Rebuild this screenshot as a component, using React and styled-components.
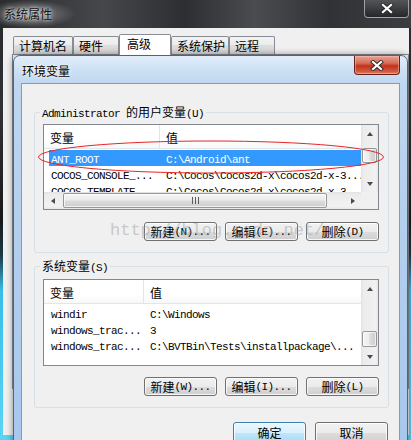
import React from "react";
import styled, { createGlobalStyle, css } from "styled-components";

const HAN = /([\u2E80-\u9FFF\uFF00-\uFFEF]+)/;

const userVars = [
  { name: "ANT_ROOT", value: "C:\\Android\\ant", selected: true },
  { name: "COCOS_CONSOLE_...", value: "C:\\Cocos\\Cocos2d-x\\cocos2d-x-3..." },
  { name: "COCOS_TEMPLATE...", value: "C:\\Cocos\\Cocos2d-x\\cocos2d-x-3..." },
];

const systemVars = [
  { name: "windir", value: "C:\\Windows" },
  { name: "windows_trac...", value: "3" },
  { name: "windows_trac...", value: "C:\\BVTBin\\Tests\\installpackage\\..." },
];

const tabs = [
  { label: "计算机名", width: 60 },
  { label: "硬件", width: 46 },
  { label: "高级", width: 52, active: true },
  { label: "系统保护", width: 58 },
  { label: "远程", width: 46 },
];

function Mixed({ text }) {
  return text.split(HAN).map((part, i) => {
    if (!part) return null;
    return HAN.test(part) ? <Han key={i}>{part}</Han> : <Latin key={i}>{part}</Latin>;
  });
}

function CloseGlyph() {
  return (
    <svg width="14" height="11" viewBox="0 0 14 11">
      <path d="M3 2 L11 9 M11 2 L3 9" stroke="#2b2b2b" strokeWidth="4" strokeLinecap="square" />
      <path d="M3 2 L11 9 M11 2 L3 9" stroke="#fff" strokeWidth="2.2" strokeLinecap="square" />
    </svg>
  );
}

function VScroll({ thumbTop, thumbSize }) {
  return (
    <VBar>
      <ArrowBtn><Arrow $dir="up" /></ArrowBtn>
      <VTrack>
        <VThumb $top={thumbTop} $size={thumbSize} />
      </VTrack>
      <ArrowBtn><Arrow $dir="down" /></ArrowBtn>
    </VBar>
  );
}

function VarList({ rows, col, rowsHeight, thumbTop, thumbSize, hscroll }) {
  return (
    <ListBox>
      <ListBody>
        <ListMain>
          <Header $col={col}>
            <HeadCell $first>变量</HeadCell>
            <HeadCell>值</HeadCell>
          </Header>
          <Rows $h={rowsHeight}>
            {rows.map((r, i) => (
              <Row key={i} $col={col} $sel={r.selected}>
                <Cell $first><Mixed text={r.name} /></Cell>
                <Cell><Mixed text={r.value} /></Cell>
              </Row>
            ))}
          </Rows>
        </ListMain>
        <VScroll thumbTop={thumbTop} thumbSize={thumbSize} />
      </ListBody>
      {hscroll && (
        <HRow>
          <HBar>
            <ArrowBtn><Arrow $dir="left" /></ArrowBtn>
            <HTrack>
              <HThumb><Grip /></HThumb>
            </HTrack>
            <ArrowBtn><Arrow $dir="right" /></ArrowBtn>
          </HBar>
          <Corner />
        </HRow>
      )}
    </ListBox>
  );
}

function VarGroup({ legend, top, padTop, gap, children, buttons }) {
  return (
    <Group $mt={top}>
      <Legend><Mixed text={legend} /></Legend>
      <GroupBody $pt={padTop}>
        {children}
        <ButtonRow $mt={gap}>
          {buttons.map((b) => (
            <Btn key={b}><Mixed text={b} /></Btn>
          ))}
        </ButtonRow>
      </GroupBody>
    </Group>
  );
}

export default function App() {
  return (
    <>
      <GlobalStyle />
      <Desktop>
        <BackWindow>
          <BackTitleBar>
            <BackTitle>系统属性</BackTitle>
            <BackClose><CloseGlyph /></BackClose>
          </BackTitleBar>
          <BackClient>
            <TabStrip>
              {tabs.map((t) => (
                <Tab key={t.label} $w={t.width} $active={t.active}>{t.label}</Tab>
              ))}
            </TabStrip>
            <TabPanel />
          </BackClient>
        </BackWindow>

        <FrontWindow>
          <FrontTitleBar>
            <FrontTitle>环境变量</FrontTitle>
            <RedClose><CloseGlyph /></RedClose>
          </FrontTitleBar>
          <Client>
            <VarGroup
              legend="Administrator 的用户变量(U)"
              top={21}
              padTop={5}
              gap={12}
              buttons={["新建(N)...", "编辑(E)...", "删除(D)"]}
            >
              <VarList rows={userVars} col={115} rowsHeight={43} thumbTop={6} thumbSize={15} hscroll />
            </VarGroup>
            <VarGroup
              legend="系统变量(S)"
              top={6}
              padTop={6}
              gap={11}
              buttons={["新建(W)...", "编辑(I)...", "删除(L)"]}
            >
              <VarList rows={systemVars} col={99} rowsHeight={61} thumbTop={34} thumbSize={16} />
            </VarGroup>
            <Footer>
              <Btn $default $tall>确定</Btn>
              <Btn $tall>取消</Btn>
            </Footer>
          </Client>
        </FrontWindow>

        <Watermark>http://blog.csdn.net/</Watermark>
        <Marker width="348" height="36" viewBox="0 0 348 36">
          <ellipse cx="174" cy="17" rx="172.5" ry="16" fill="none" stroke="#e8262a" strokeWidth="1" />
        </Marker>
      </Desktop>
    </>
  );
}

const GlobalStyle = createGlobalStyle`
  html, body {
    margin: 0;
    padding: 0;
    background: #111;
    overflow: hidden;
  }
  body {
    font-family: "Noto Sans CJK SC", "Liberation Sans", sans-serif;
    font-size: 12px;
    color: #000;
  }
`;

const Han = styled.span`
  font-family: "Noto Sans CJK SC", sans-serif;
  font-size: 12px;
`;

const Latin = styled.span`
  font-family: "Liberation Mono", monospace;
  font-size: 11px;
  letter-spacing: -0.6px;
`;

const Desktop = styled.div`
  position: relative;
  width: 411px;
  height: 440px;
  overflow: hidden;
  background: linear-gradient(
    180deg,
    #26282b 0%,
    #303236 25%,
    #17191b 50%,
    #1c3a48 58%,
    #37bde9 66%,
    #5ad4f6 100%
  );
`;

const BackWindow = styled.div`
  display: flex;
  flex-direction: column;
  height: 100%;
`;

const BackTitleBar = styled.div`
  height: 28px;
  flex: none;
  display: flex;
  justify-content: space-between;
  align-items: flex-start;
  background:
    radial-gradient(ellipse 46px 14px at 30px 14px, rgba(210, 210, 210, 0.55), transparent),
    linear-gradient(90deg, #2a2c2f 0%, #45474b 25%, #2c2e31 45%, #4a4c50 62%, #303235 80%, #3b3d40 100%);
`;

const BackTitle = styled.div`
  margin: 6px 0 0 4px;
  line-height: 16px;
  font-size: 12px;
  color: #111;
  text-shadow: 0 0 6px rgba(255, 255, 255, 0.9), 0 0 3px rgba(255, 255, 255, 0.8);
`;

const BackClose = styled.div`
  width: 45px;
  height: 18px;
  margin-right: 2px;
  box-sizing: border-box;
  border: 1px solid rgba(210, 210, 210, 0.65);
  border-top: none;
  border-radius: 0 0 4px 4px;
  background: linear-gradient(180deg, rgba(90, 92, 96, 0.8), rgba(35, 37, 40, 0.9));
  display: flex;
  align-items: center;
  justify-content: center;
`;

const BackClient = styled.div`
  flex: 1;
  margin: 0 2px 5px 3px;
  background: #f0f0f0;
  padding-top: 6px;
`;

const TabStrip = styled.div`
  display: flex;
  align-items: flex-end;
  height: 20px;
  margin-left: 10px;
`;

const Tab = styled.div`
  box-sizing: border-box;
  width: ${(p) => p.$w}px;
  height: ${(p) => (p.$active ? 21 : 18)}px;
  padding-left: ${(p) => (p.$active ? 7 : 5)}px;
  border: 1px solid #898c95;
  border-bottom: none;
  border-radius: 2px 2px 0 0;
  line-height: ${(p) => (p.$active ? 17 : 17)}px;
  font-size: 12px;
  white-space: nowrap;
  ${(p) =>
    p.$active
      ? css`
          position: relative;
          z-index: 1;
          margin-bottom: -1px;
          background: #fff;
        `
      : css`
          background: linear-gradient(180deg, #f3f3f3 0%, #ebebeb 50%, #dddddd 50%, #d6d6d6 100%);
        `}
`;

const TabPanel = styled.div`
  height: 333px;
  margin: 0 0 0 9px;
  border: 1px solid #898c95;
  background: #fafafa;
`;

const FrontWindow = styled.div`
  position: absolute;
  left: 13px;
  top: 55px;
  width: 395px;
  height: 400px;
  box-sizing: border-box;
  padding: 0 7px;
  border: 1px solid #4d6582;
  border-radius: 7px 7px 0 0;
  background: linear-gradient(
    180deg,
    #e2eefa 0px,
    #cfe2f5 12px,
    #bfd7f0 27px,
    #b7d1ee 120px,
    #a6c7ec 100%
  );
  box-shadow: 0 0 7px rgba(0, 0, 0, 0.45);
  display: flex;
  flex-direction: column;
`;

const FrontTitleBar = styled.div`
  height: 27px;
  flex: none;
  display: flex;
  justify-content: space-between;
  align-items: flex-start;
`;

const FrontTitle = styled.div`
  margin: 7px 0 0 1px;
  line-height: 16px;
  font-size: 12px;
  color: #000;
  text-shadow: 0 0 5px rgba(255, 255, 255, 0.95), 0 0 2px rgba(255, 255, 255, 0.9);
`;

const RedClose = styled.div`
  width: 46px;
  height: 19px;
  box-sizing: border-box;
  border: 1px solid #6a2218;
  border-top: none;
  border-radius: 0 0 4px 4px;
  background: linear-gradient(180deg, #e6a596 0%, #d86a55 40%, #c2321d 55%, #cf5a3f 85%, #e0826a 100%);
  box-shadow: inset 0 0 0 1px rgba(255, 200, 190, 0.45);
  display: flex;
  align-items: center;
  justify-content: center;
`;

const Client = styled.div`
  flex: 1;
  display: flex;
  flex-direction: column;
  background: #f0f0f0;
  border: 1px solid #8d99a6;
`;

const Group = styled.fieldset`
  margin: ${(p) => p.$mt}px 10px 0 12px;
  padding: 0;
  min-width: 0;
  border: 1px solid #d5dfe5;
  border-radius: 3px;
`;

const Legend = styled.legend`
  margin-left: 5px;
  padding: 0 2px;
  height: 14px;
  line-height: 14px;
  white-space: nowrap;
`;

const GroupBody = styled.div`
  padding: ${(p) => p.$pt}px 9px 11px 8px;
`;

const ButtonRow = styled.div`
  display: flex;
  justify-content: flex-end;
  gap: 8px;
  margin-top: ${(p) => p.$mt}px;
`;

const Btn = styled.div`
  box-sizing: border-box;
  width: 73px;
  height: ${(p) => (p.$tall ? 22 : 19)}px;
  border: 1px solid ${(p) => (p.$default ? "#3c7fb1" : "#707070")};
  border-radius: 3px;
  background: ${(p) =>
    p.$default
      ? "linear-gradient(180deg, #eaf6fd 0%, #d9f0fc 50%, #bee6fd 50%, #a7d9f5 100%)"
      : "linear-gradient(180deg, #f2f2f2 0%, #ebebeb 50%, #dddddd 50%, #cfcfcf 100%)"};
  box-shadow: inset 0 0 0 1px rgba(255, 255, 255, 0.8);
  display: flex;
  align-items: center;
  justify-content: center;
  font-size: 12px;
  line-height: 16px;
  white-space: nowrap;
  padding-top: ${(p) => (p.$tall ? 0 : 1)}px;
`;

const Footer = styled.div`
  display: flex;
  justify-content: flex-end;
  gap: 9px;
  margin: 14px 11px 0 0;
`;

const ListBox = styled.div`
  display: flex;
  flex-direction: column;
  border: 1px solid #828790;
  background: #fff;
`;

const ListBody = styled.div`
  display: flex;
`;

const ListMain = styled.div`
  flex: 1;
  min-width: 0;
`;

const Header = styled.div`
  display: grid;
  grid-template-columns: ${(p) => p.$col + 1}px 1fr;
  height: 24px;
  box-sizing: border-box;
  border-bottom: 1px solid #e5e5e5;
  background: linear-gradient(180deg, #ffffff 0%, #ffffff 60%, #f7f8f9 100%);
`;

const HeadCell = styled.div`
  padding: 5px 0 0 6px;
  line-height: 16px;
  border-right: ${(p) => (p.$first ? "1px solid #e5e5e5" : "none")};
`;

const Rows = styled.div`
  height: ${(p) => p.$h}px;
  box-sizing: border-box;
  padding-top: 1px;
  overflow: hidden;
`;

const Row = styled.div`
  display: grid;
  grid-template-columns: ${(p) => p.$col - 5}px 1fr;
  height: 16px;
  line-height: 16px;
  margin-left: 5px;
  white-space: nowrap;
  background: ${(p) => (p.$sel ? "#3399ff" : "transparent")};
  color: ${(p) => (p.$sel ? "#fff" : "#000")};
`;

const Cell = styled.div`
  overflow: hidden;
  padding-left: ${(p) => (p.$first ? 2 : 7)}px;
`;

const VBar = styled.div`
  width: 17px;
  flex: none;
  display: flex;
  flex-direction: column;
  background: linear-gradient(90deg, #e2e2e2 0%, #ececec 15%, #f1f1f1 85%, #e6e6e6 100%);
`;

const ArrowBtn = styled.div`
  width: 17px;
  height: 17px;
  flex: none;
  display: flex;
  align-items: center;
  justify-content: center;
`;

const Arrow = styled.span`
  width: 0;
  height: 0;
  ${({ $dir }) =>
    $dir === "up"
      ? css`
          border-left: 3.5px solid transparent;
          border-right: 3.5px solid transparent;
          border-bottom: 4px solid #4a4a4a;
        `
      : $dir === "down"
      ? css`
          border-left: 3.5px solid transparent;
          border-right: 3.5px solid transparent;
          border-top: 4px solid #4a4a4a;
        `
      : $dir === "left"
      ? css`
          border-top: 3.5px solid transparent;
          border-bottom: 3.5px solid transparent;
          border-right: 4px solid #4a4a4a;
        `
      : css`
          border-top: 3.5px solid transparent;
          border-bottom: 3.5px solid transparent;
          border-left: 4px solid #4a4a4a;
        `}
`;

const VTrack = styled.div`
  flex: 1;
  display: flex;
  flex-direction: column;
  align-items: center;
`;

const VThumb = styled.div`
  width: 15px;
  height: ${(p) => p.$size}px;
  margin-top: ${(p) => p.$top}px;
  box-sizing: border-box;
  border: 1px solid #979797;
  border-radius: 2px;
  background: linear-gradient(90deg, #f5f5f5 0%, #ececec 45%, #dcdcdc 55%, #cdcdcd 100%);
  box-shadow: inset 0 0 0 1px rgba(255, 255, 255, 0.7);
`;

const HRow = styled.div`
  display: flex;
  height: 17px;
`;

const HBar = styled.div`
  flex: 1;
  display: flex;
  background: linear-gradient(180deg, #e2e2e2 0%, #ececec 15%, #f1f1f1 85%, #e6e6e6 100%);
`;

const HTrack = styled.div`
  flex: 1;
  display: flex;
  align-items: center;
`;

const HThumb = styled.div`
  width: 264px;
  height: 15px;
  margin-left: 2px;
  box-sizing: border-box;
  border: 1px solid #979797;
  border-radius: 2px;
  background: linear-gradient(180deg, #f5f5f5 0%, #ececec 45%, #dcdcdc 55%, #cdcdcd 100%);
  box-shadow: inset 0 0 0 1px rgba(255, 255, 255, 0.7);
  display: flex;
  align-items: center;
  justify-content: center;
`;

const Grip = styled.span`
  width: 7px;
  height: 7px;
  background: repeating-linear-gradient(90deg, #5b5b5b 0 1px, transparent 1px 3px);
`;

const Corner = styled.div`
  width: 17px;
  background: #f0f0f0;
`;

const Watermark = styled.div`
  position: absolute;
  left: 110px;
  top: 221px;
  font-family: "Liberation Mono", monospace;
  font-size: 17px;
  line-height: 20px;
  color: rgba(160, 160, 160, 0.5);
  pointer-events: none;
  white-space: nowrap;
`;

const Marker = styled.svg`
  position: absolute;
  left: 37px;
  top: 140px;
  pointer-events: none;
`;
